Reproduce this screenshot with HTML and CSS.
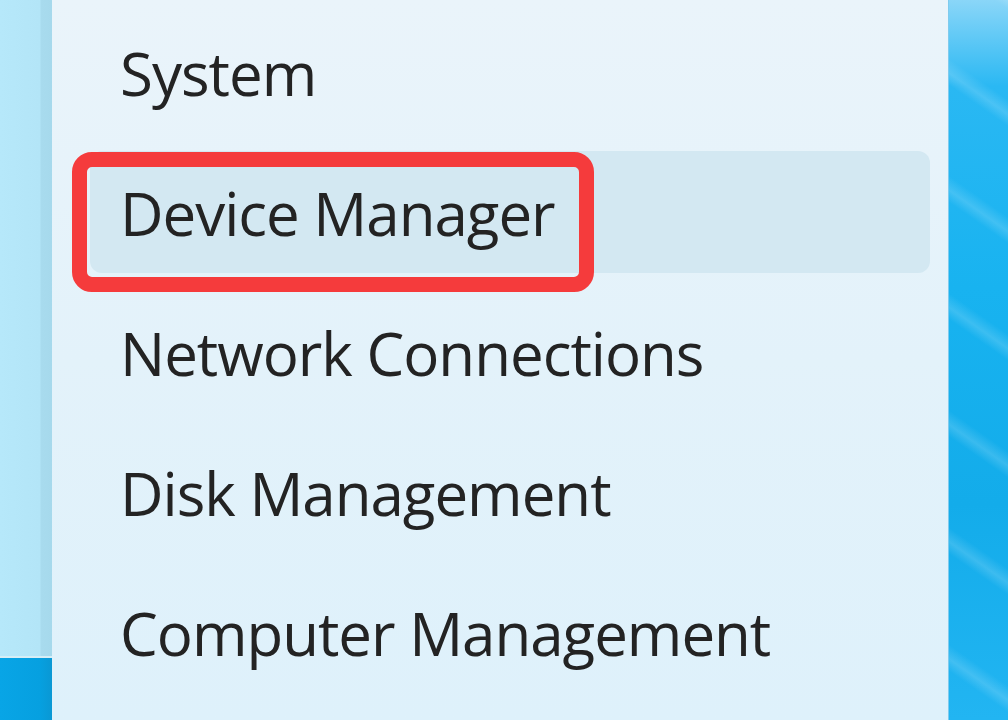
FILE: index.html
```html
<!DOCTYPE html>
<html lang="en">
<head>
<meta charset="utf-8">
<title>Quick Link menu</title>
<link rel="stylesheet" href="styles.css">
</head>
<body>
<div class="screen">
  <div class="left-edge">
    <div class="left-top"></div>
    <div class="left-bottom"></div>
  </div>
  <div class="menu">
    <ul class="items">
      <li class="item">System</li>
      <li class="item hover">Device Manager<span class="callout"></span></li>
      <li class="item">Network Connections</li>
      <li class="item">Disk Management</li>
      <li class="item">Computer Management</li>
    </ul>
  </div>
  <div class="wallpaper"></div>
</div>
</body>
</html>
```
FILE: styles.css
```css
html, body {
  margin: 0;
  padding: 0;
  width: 1008px;
  height: 720px;
  overflow: hidden;
}
.screen {
  display: flex;
  width: 1008px;
  height: 720px;
}
.left-edge {
  width: 52px;
  display: flex;
  flex-direction: column;
}
.left-top {
  flex: 1;
  background: linear-gradient(90deg, #b6e8fa 0, #b3e5f7 40px, #a8dbee 41px, #a6d9ec 52px);
}
.left-bottom {
  height: 62px;
  border-top: 2px solid #d6eef6;
  background: linear-gradient(90deg, #08a5e6 0, #06a0e0 40px, #0a98d4 52px);
}
.menu {
  width: 896px;
  background: linear-gradient(180deg, #eaf4fa 0, #e3f2fa 50%, #def1fb 100%);
  padding: 11px 18px 0 38px;
  box-sizing: border-box;
}
.items {
  list-style: none;
  margin: 0;
  padding: 0;
  display: flex;
  flex-direction: column;
  gap: 18px;
}
.item {
  position: relative;
  height: 122px;
  display: flex;
  align-items: center;
  padding: 2px 0 0 30px;
  box-sizing: border-box;
  font-family: "Open Sans", "Noto Sans", sans-serif;
  font-size: 60px;
  letter-spacing: -1px;
  color: #232323;
  border-radius: 12px;
}
.item.hover {
  background: #d3e8f2;
}
.callout {
  position: absolute;
  left: -18px;
  top: 1px;
  width: 522px;
  height: 140px;
  box-sizing: border-box;
  border: 15px solid #f53b3c;
  border-radius: 20px;
}
.wallpaper {
  width: 60px;
  border-left: 1px solid #7fcbee;
  box-sizing: border-box;
  background:
    repeating-linear-gradient(35deg, rgba(255,255,255,0) 0, rgba(255,255,255,0) 40px, rgba(255,255,255,0.16) 50px, rgba(255,255,255,0) 62px, rgba(255,255,255,0) 96px),
    linear-gradient(180deg, #8ad6f8 0, #2ab8f3 12%, #18b3f0 40%, #13acea 70%, #22b5f2 100%);
}
```
